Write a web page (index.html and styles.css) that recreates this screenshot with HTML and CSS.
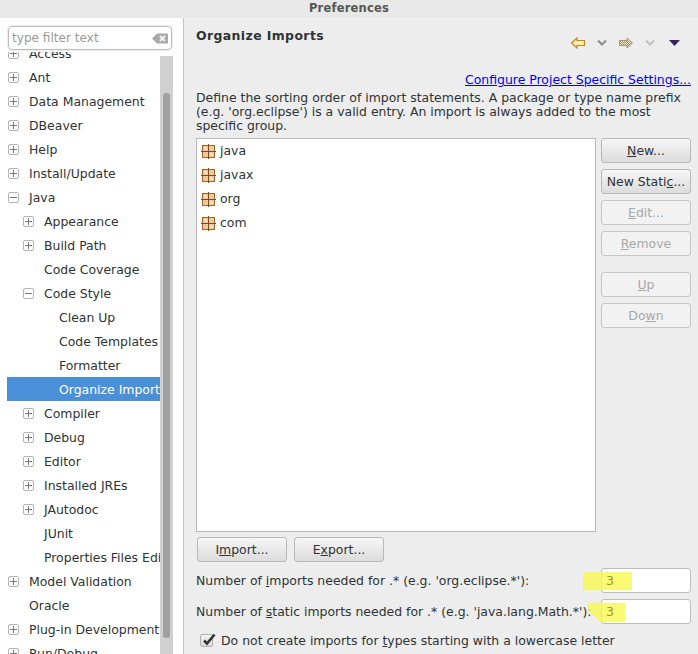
FILE: index.html
```html
<!DOCTYPE html>
<html lang="en">

<head>
    <meta charset="UTF-8">
    <title>Preferences</title>
    <link rel="stylesheet" href="styles.css">
</head>

<body>
    <div class="titlebar">Preferences</div>
    <div class="main">
        <div class="sidebar">
            <div class="filter">
                <span class="filter_text">type filter text</span>
                <svg class="filter_clear" width="16" height="11" viewBox="0 0 16 11">
                    <path d="M0 5.5 L5 0.5 H16 V10.5 H5 Z" fill="#a9a9a9" />
                    <path d="M8 3 L13 8 M13 3 L8 8" stroke="#f2f2f2" stroke-width="2" />
                </svg>
            </div>
            <div class="tree_wrap">
                <div class="tree">
                    <div class="row"><span class="twist plus"></span>Access</div>
                    <div class="row"><span class="twist plus"></span>Ant</div>
                    <div class="row"><span class="twist plus"></span>Data Management</div>
                    <div class="row"><span class="twist plus"></span>DBeaver</div>
                    <div class="row"><span class="twist plus"></span>Help</div>
                    <div class="row"><span class="twist plus"></span>Install/Update</div>
                    <div class="row"><span class="twist minus"></span>Java</div>
                    <div class="row lvl1"><span class="twist plus"></span>Appearance</div>
                    <div class="row lvl1"><span class="twist plus"></span>Build Path</div>
                    <div class="row lvl1"><span class="twist"></span>Code Coverage</div>
                    <div class="row lvl1"><span class="twist minus"></span>Code Style</div>
                    <div class="row lvl2"><span class="twist"></span>Clean Up</div>
                    <div class="row lvl2"><span class="twist"></span>Code Templates</div>
                    <div class="row lvl2"><span class="twist"></span>Formatter</div>
                    <div class="row lvl2 selected"><span class="twist"></span>Organize Imports</div>
                    <div class="row lvl1"><span class="twist plus"></span>Compiler</div>
                    <div class="row lvl1"><span class="twist plus"></span>Debug</div>
                    <div class="row lvl1"><span class="twist plus"></span>Editor</div>
                    <div class="row lvl1"><span class="twist plus"></span>Installed JREs</div>
                    <div class="row lvl1"><span class="twist plus"></span>JAutodoc</div>
                    <div class="row lvl1"><span class="twist"></span>JUnit</div>
                    <div class="row lvl1"><span class="twist"></span>Properties Files Editor</div>
                    <div class="row"><span class="twist plus"></span>Model Validation</div>
                    <div class="row"><span class="twist"></span>Oracle</div>
                    <div class="row"><span class="twist plus"></span>Plug-in Development</div>
                    <div class="row"><span class="twist plus"></span>Run/Debug</div>
                </div>
                <div class="scrollbar"><div class="thumb"></div></div>
            </div>
        </div>

        <div class="content">
            <div class="head">
                <b class="title">Organize Imports</b>
                <div class="nav">
                    <svg width="16" height="12" viewBox="0 0 16 12">
                        <path d="M1.5 6 L7 1 V3.5 H14.5 V8.5 H7 V11 Z" fill="#fdeeb0" stroke="#c08a1e" stroke-width="1.2" />
                    </svg>
                    <svg width="10" height="8" viewBox="0 0 10 8">
                        <path d="M1 1.5 L5 5.5 L9 1.5" fill="none" stroke="#8e8e8e" stroke-width="2.2" />
                    </svg>
                    <svg width="16" height="12" viewBox="0 0 16 12">
                        <defs>
                            <pattern id="dither" width="2" height="2" patternUnits="userSpaceOnUse">
                                <rect width="2" height="2" fill="#f4efe0" />
                                <rect width="1" height="1" fill="#9a8a66" />
                                <rect x="1" y="1" width="1" height="1" fill="#9a8a66" />
                            </pattern>
                        </defs>
                        <path d="M14.5 6 L9 1 V3.5 H1.5 V8.5 H9 V11 Z" fill="url(#dither)" stroke="#a8986f" stroke-width="1" />
                    </svg>
                    <svg width="10" height="8" viewBox="0 0 10 8">
                        <path d="M1 1.5 L5 5.5 L9 1.5" fill="none" stroke="#c4c4c4" stroke-width="2.2" />
                    </svg>
                    <svg class="menu" width="11" height="6" viewBox="0 0 11 6">
                        <path d="M0 0 H11 L5.5 6 Z" fill="#35235a" />
                    </svg>
                </div>
            </div>
            <div class="link_row"><a href="#">Configure Project Specific Settings...</a></div>
            <p class="desc">Define the sorting order of import statements. A package or type name prefix (e.g. 'org.eclipse') is a valid entry. An import is always added to the most specific group.</p>

            <div class="list_area">
                <div class="list_col">
                    <div class="list">
                        <div class="item"><svg class="pkg" width="15" height="15" viewBox="0 0 15 15"><use href="#pkg_icon" /></svg>java</div>
                        <div class="item"><svg class="pkg" width="15" height="15" viewBox="0 0 15 15"><use href="#pkg_icon" /></svg>javax</div>
                        <div class="item"><svg class="pkg" width="15" height="15" viewBox="0 0 15 15"><use href="#pkg_icon" /></svg>org</div>
                        <div class="item"><svg class="pkg" width="15" height="15" viewBox="0 0 15 15"><use href="#pkg_icon" /></svg>com</div>
                    </div>
                    <div class="io_btns">
                        <button class="btn">I<u>m</u>port...</button>
                        <button class="btn">E<u>x</u>port...</button>
                    </div>
                </div>
                <div class="side_btns">
                    <button class="btn"><u>N</u>ew...</button>
                    <button class="btn">New Stati<u>c</u>...</button>
                    <button class="btn" disabled><u>E</u>dit...</button>
                    <button class="btn" disabled><u>R</u>emove</button>
                    <button class="btn spaced" disabled><u>U</u>p</button>
                    <button class="btn" disabled>Do<u>w</u>n</button>
                </div>
            </div>

            <div class="num_row first">
                <span>Number of <u>i</u>mports needed for .* (e.g. 'org.eclipse.*'):</span>
                <div class="num_input"><span class="num_value">3</span></div>
                <div class="mark mark_one"></div>
            </div>
            <div class="num_row">
                <span>Number of <u>s</u>tatic imports needed for .* (e.g. 'java.lang.Math.*'):</span>
                <div class="num_input"><span class="num_value">3</span></div>
                <div class="mark mark_two"></div>
            </div>
            <div class="check_row">
                <span class="check">
                    <svg width="16" height="14" viewBox="0 0 16 14">
                        <path d="M3 7.5 L6 10.5 L13.5 1.5" fill="none" stroke="#2e3436" stroke-width="2.6" />
                    </svg>
                </span>
                <span>Do not create imports for <u>t</u>ypes starting with a lowercase letter</span>
            </div>
        </div>
    </div>

    <svg class="defs" width="0" height="0">
        <symbol id="pkg_icon" viewBox="0 0 15 15">
            <rect x="1.5" y="1.5" width="12" height="12" fill="#ecca9c" stroke="#a8622a" />
            <rect x="3" y="3" width="3" height="3" fill="#f6e3c6" />
            <rect x="9" y="9" width="3" height="3" fill="#f6e3c6" />
            <path d="M7.5 0 V15 M0 7.5 H15" stroke="#7a4a22" />
        </symbol>
    </svg>
</body>

</html>
```

FILE: styles.css
```css
* {
    box-sizing: border-box;
}

body {
    margin: 0;
    height: 654px;
    overflow: hidden;
    font-family: "DejaVu Sans", sans-serif;
    font-size: 12.45px;
    color: #2e3436;
    background-color: #ededed;
}

.titlebar {
    height: 18px;
    line-height: 16px;
    text-align: center;
    font-size: 11.5px;
    font-weight: bold;
    color: #555753;
    letter-spacing: 0.2px;
    background-color: #e8e8e8;
}

.main {
    display: flex;
    height: 636px;
}

.defs {
    position: absolute;
}

/* left tree */
.sidebar {
    width: 183px;
    background-color: white;
    padding: 8px 0 0 7px;
    display: flex;
    flex-direction: column;
}

.filter {
    width: 164px;
    height: 24px;
    margin-left: 1px;
    border: 1px solid #bdbdbd;
    border-radius: 4px;
    display: flex;
    align-items: center;
    justify-content: space-between;
    padding: 0 3px 0 3px;
    box-shadow: 0 0 0 1px #ececec;
}

.filter_text {
    font-size: 12.1px;
    color: #9a9a9a;
    margin-top: -1px;
}

.tree_wrap {
    display: flex;
    height: 602px;
    margin-top: 2px;
    overflow: hidden;
}

.tree {
    width: 153px;
    margin-top: -11px;
    overflow: hidden;
}

.row {
    height: 24px;
    display: flex;
    align-items: center;
    white-space: nowrap;
    padding-left: 1px;
}

.lvl1 {
    padding-left: 16px;
}

.lvl2 {
    padding-left: 31px;
}

.selected {
    background-color: #4a90d9;
    color: white;
}

.twist {
    flex: none;
    width: 11px;
    height: 11px;
    margin-right: 10px;
    position: relative;
}

.plus,
.minus {
    border: 1px solid #b5b5b5;
    border-radius: 2px;
}

.plus::before,
.minus::before {
    content: "";
    position: absolute;
    left: 1px;
    right: 1px;
    top: 4px;
    height: 1px;
    background-color: #7a7a7a;
}

.plus::after {
    content: "";
    position: absolute;
    top: 1px;
    bottom: 1px;
    left: 4px;
    width: 1px;
    background-color: #7a7a7a;
}

.scrollbar {
    width: 13px;
    margin-top: 4px;
    background-color: #d0d0d0;
    padding: 37px 3px 0;
}

.thumb {
    height: 545px;
    background-color: #a0a0a0;
    border-radius: 3px;
}

/* right page */
.content {
    flex: 1;
    border-left: 1px solid #c4c4c4;
    padding: 0 7px 0 12px;
}

.head {
    height: 54px;
    display: flex;
    justify-content: space-between;
}

.title {
    margin-top: 10px;
    letter-spacing: 0.4px;
}

.nav {
    display: flex;
    align-items: center;
    gap: 11px;
    height: 14px;
    margin-top: 18px;
    padding-right: 11px;
}

.menu {
    margin-left: 3px;
}

.link_row {
    text-align: right;
    line-height: 15px;
    height: 18px;
}

.link_row a {
    color: #0000ff;
}

.desc {
    margin: 0;
    line-height: 14px;
    height: 48px;
    padding-top: 1px;
}

.list_area {
    display: flex;
    gap: 5px;
}

.list_col {
    width: 400px;
}

.list {
    height: 394px;
    background-color: white;
    border: 1px solid #b8b8b8;
}

.item {
    height: 24px;
    display: flex;
    align-items: center;
    padding: 0 0 2px 4px;
}

.pkg {
    margin: 2px 4px 0 0;
}

.io_btns {
    display: flex;
    gap: 7px;
    margin: 5px 0 0 1px;
}

.side_btns {
    display: flex;
    flex-direction: column;
    gap: 6px;
}

.btn {
    width: 90px;
    height: 25px;
    padding: 0;
    font-family: inherit;
    font-size: inherit;
    color: #2e3436;
    border: 1px solid #b9b9b9;
    border-radius: 3px;
    background: linear-gradient(#f6f6f6, #dcdcdc);
}

.btn:disabled {
    color: #a8a8a8;
    background: #f2f2f2;
    border-color: #c6c6c6;
}

.spaced {
    margin-top: 10px;
}

.num_row {
    position: relative;
    height: 31px;
    display: flex;
    align-items: center;
    justify-content: space-between;
}

.first {
    margin-top: 3px;
}

.num_input {
    width: 90px;
    height: 25px;
    line-height: 23px;
    padding-left: 4px;
    background-color: white;
    border: 1px solid #bdbdbd;
    border-radius: 3px;
}

.num_value {
    position: relative;
    z-index: 1;
    color: #96962e;
}

/* highlighter strokes over the two values */
.mark {
    position: absolute;
    background-color: rgba(248, 248, 80, 0.8);
}

.mark_one {
    left: 387px;
    top: 7px;
    width: 49px;
    height: 18px;
}

.mark_two {
    left: 392px;
    top: 7px;
    width: 37px;
    height: 19px;
    clip-path: polygon(0 0, 100% 0, 100% 100%, 35% 100%, 0 40%);
}

.check_row {
    display: flex;
    align-items: center;
    gap: 8px;
    margin-top: 2px;
    padding-left: 4px;
    height: 22px;
}

.check {
    width: 13px;
    height: 13px;
    display: flex;
    align-items: center;
    border: 1px solid #b0b0b0;
    border-radius: 2px;
    background: linear-gradient(#f4f4f4, #dadada);
}

.check svg {
    flex: none;
    overflow: visible;
}
```
